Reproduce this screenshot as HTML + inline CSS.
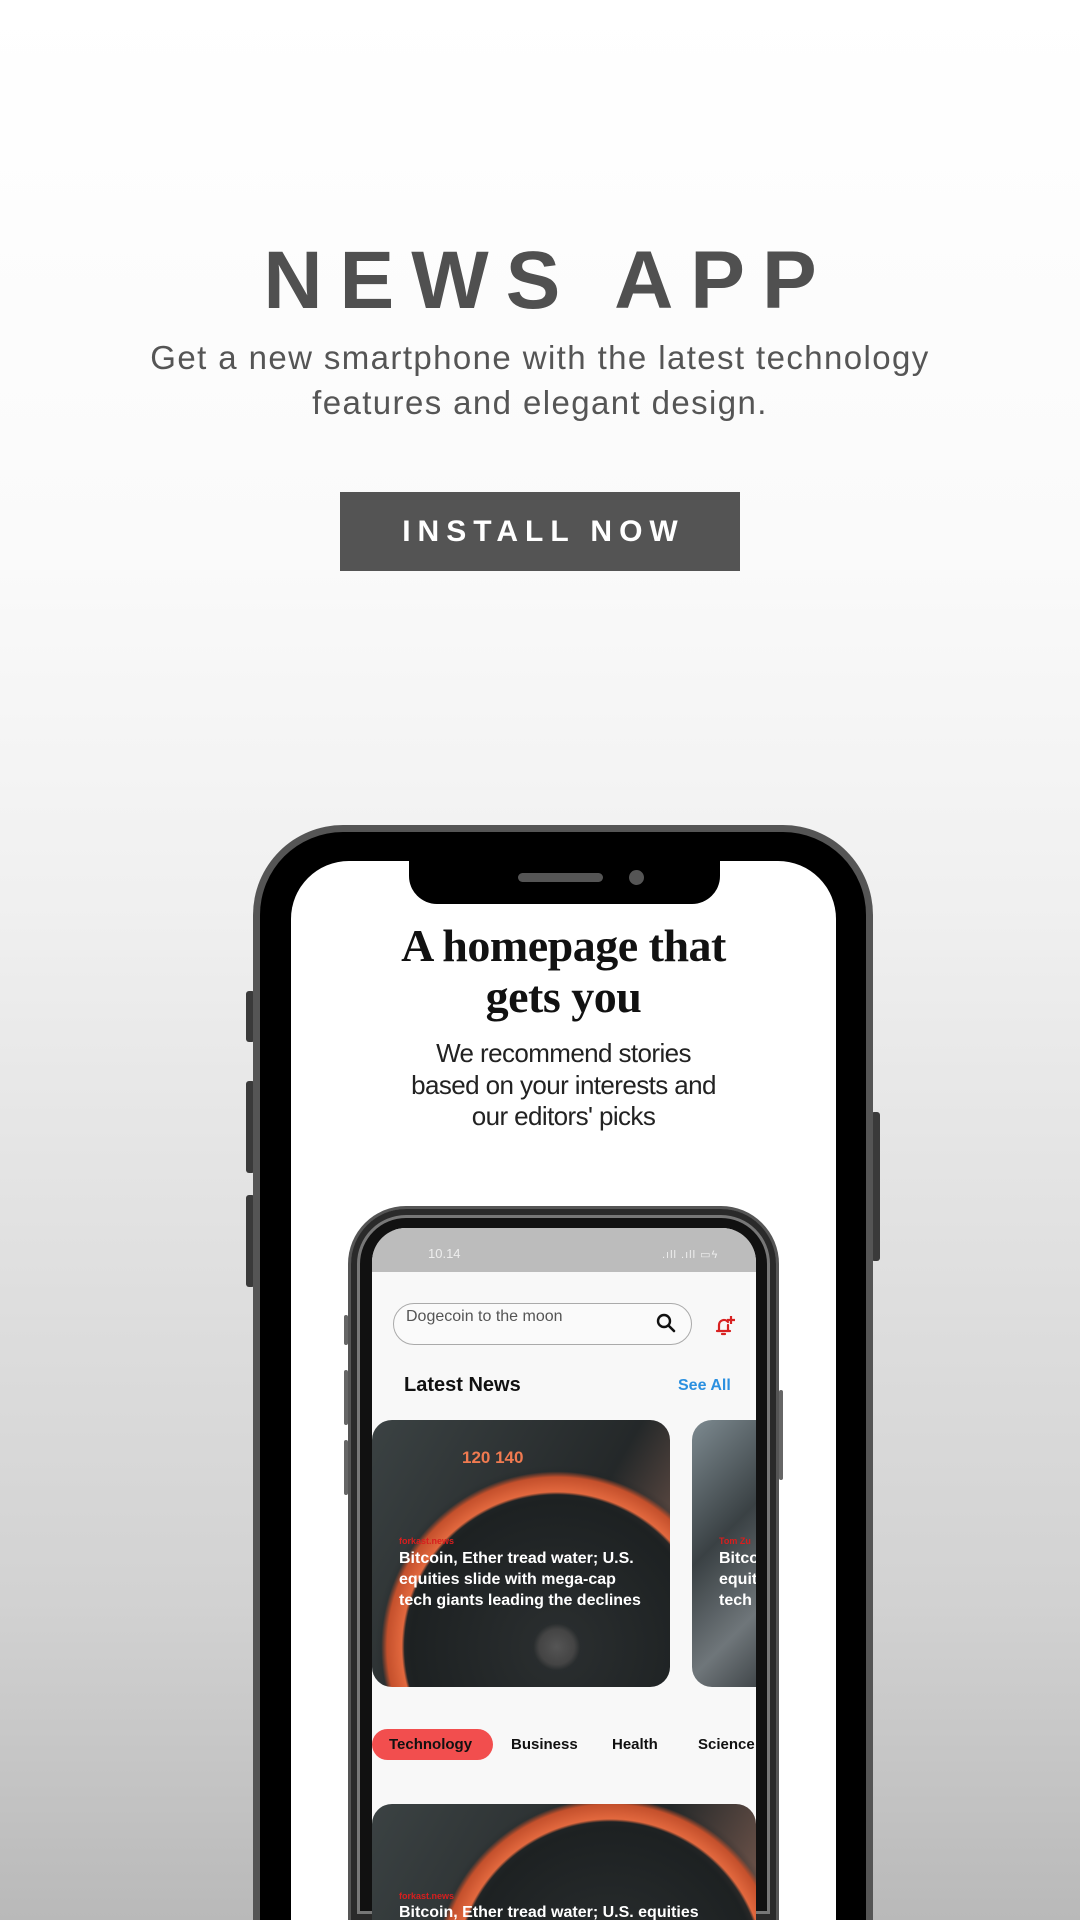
<!DOCTYPE html>
<html><head><meta charset="utf-8">
<style>
*{margin:0;padding:0;box-sizing:border-box}
html,body{width:1080px;height:1920px;overflow:hidden}
body{position:relative;font-family:"Liberation Sans",sans-serif;background:linear-gradient(#ffffff 0px,#fafafa 560px,#f0f0f0 900px,#dedede 1300px,#d2d2d2 1600px,#b9b9b9 1920px)}
.abs{position:absolute}
.title{left:0;width:1080px;top:236px;text-align:center;font-size:82px;font-weight:bold;color:#505050;letter-spacing:17px;padding-left:17px;line-height:90px}
.sub{left:0;width:1080px;top:335px;text-align:center;font-size:33px;color:#555;line-height:45px;letter-spacing:1.4px}
.btn{left:340px;top:492px;width:400px;height:79px;background:#545454;color:#fff;font-weight:bold;font-size:30px;letter-spacing:7px;text-align:center;line-height:79px;padding-left:7px}
.phone{left:253px;top:825px;width:620px;height:1095px;border-radius:90px 90px 0 0;background:#000;border:7px solid #555;border-bottom:0}
.screen{left:291px;top:861px;width:545px;height:1059px;border-radius:58px 58px 0 0;background:#fff;overflow:hidden}
.notch{left:409px;top:850px;width:311px;height:54px;background:#000;border-radius:0 0 28px 28px}
.btnside{background:#3a3a3a;border-radius:3px}
h2{position:absolute;left:291px;width:545px;text-align:center;font-family:"Liberation Serif",serif;font-weight:bold;font-size:46px;line-height:51px;top:920px;color:#111;letter-spacing:-0.5px}
.rec{left:291px;width:545px;top:1038px;text-align:center;font-size:26px;line-height:31.5px;color:#222;letter-spacing:-0.6px}
.iphone{left:348px;top:1206px;width:431px;height:714px;border-radius:58px 58px 0 0;background:#111;border:3px solid #555;border-bottom:0;box-shadow:inset 0 0 0 6px #2a2a2a,inset 0 0 0 9px #777}
.iscreen{left:372px;top:1228px;width:384px;height:692px;border-radius:34px 34px 0 0;background:#f8f8f8;overflow:hidden}
.card{position:absolute;border-radius:20px;overflow:hidden;background:
radial-gradient(circle at 62% 85%,#555 0,#444 6%,transparent 8%),
radial-gradient(circle at 62% 85%,transparent 52%,#e2683e 53%,#c4502c 58%,transparent 60%),
radial-gradient(circle at 62% 85%,#2b2f30 0,#1d2122 50%,transparent 62%),
linear-gradient(120deg,#3b4243,#242829 60%,#6a5148 85%,#2c2c2c)}
.ct{position:absolute;color:#fff;font-weight:bold;font-size:16px;line-height:21px}
.lab{position:absolute;color:#d81e1e;font-size:9px;font-weight:bold}
</style></head><body>
<div class="abs title">NEWS APP</div>
<div class="abs sub">Get a new smartphone with the latest technology<br>features and elegant design.</div>
<div class="abs btn">INSTALL NOW</div>

<div class="abs btnside" style="left:246px;top:991px;width:9px;height:51px"></div>
<div class="abs btnside" style="left:246px;top:1081px;width:9px;height:92px"></div>
<div class="abs btnside" style="left:246px;top:1195px;width:9px;height:92px"></div>
<div class="abs btnside" style="left:871px;top:1112px;width:9px;height:149px"></div>
<div class="abs phone"></div>
<div class="abs screen"></div>
<div class="abs notch"></div>
<div class="abs" style="left:518px;top:873px;width:85px;height:9px;border-radius:5px;background:#555"></div>
<div class="abs" style="left:629px;top:870px;width:15px;height:15px;border-radius:50%;background:#555"></div>

<h2>A homepage that<br>gets you</h2>
<div class="abs rec">We recommend stories<br>based on your interests and<br>our editors' picks</div>

<div class="abs iphone"></div>
<div class="abs btnside" style="left:344px;top:1315px;width:4px;height:30px;background:#666"></div>
<div class="abs btnside" style="left:344px;top:1370px;width:4px;height:55px;background:#666"></div>
<div class="abs btnside" style="left:344px;top:1440px;width:4px;height:55px;background:#666"></div>
<div class="abs btnside" style="left:779px;top:1390px;width:4px;height:90px;background:#666"></div>
<div class="abs iscreen">
  <div class="abs" style="left:0;top:0;width:384px;height:44px;background:#bcbcbc"></div>
  <div class="abs" style="left:56px;top:18px;color:#eee;font-size:13px">10.14</div>
  <div class="abs" style="left:290px;top:20px;color:#eee;font-size:11px;letter-spacing:1px">.ıll .ıll ▭ϟ</div>
  <div class="abs" style="left:21px;top:75px;width:299px;height:42px;border:1px solid #aaa;border-radius:21px;background:#fafafa"></div>
  <div class="abs" style="left:34px;top:80px;font-size:16px;color:#555">Dogecoin to the moon</div>
  <svg class="abs" style="left:283px;top:84px" width="22" height="22" viewBox="0 0 22 22"><circle cx="9" cy="9" r="6" fill="none" stroke="#111" stroke-width="2.4"/><path d="M13.5 13.5L19 19" stroke="#111" stroke-width="2.6" stroke-linecap="round"/></svg>
  <svg class="abs" style="left:340px;top:84px" width="26" height="26" viewBox="0 0 26 26"><path d="M5 19h13M7 19v-6a5 5 0 0 1 9-3M16 13v6M10 22h3" fill="none" stroke="#d82222" stroke-width="2.2" stroke-linecap="round"/><path d="M19 4v8M15 8h8" stroke="#d82222" stroke-width="2.2"/></svg>
  <div class="abs" style="left:32px;top:146px;font-size:20px;font-weight:bold;color:#111">Latest News</div>
  <div class="abs" style="left:306px;top:149px;font-size:16px;font-weight:bold;color:#2b90e0">See All</div>
  <div class="card" style="left:0;top:192px;width:298px;height:267px">
    <div class="abs" style="left:90px;top:28px;color:#f07a50;font-weight:bold;font-size:17px">120 140</div>
    <div class="lab" style="left:27px;top:116px">forkast.news</div>
    <div class="ct" style="left:27px;top:128px;width:245px">Bitcoin, Ether tread water; U.S. equities slide with mega-cap tech giants leading the declines</div>
  </div>
  <div class="card" style="left:320px;top:192px;width:100px;height:267px;background:linear-gradient(135deg,#7d8a90,#3a4144 40%,#6f767a 70%,#2c3134)">
    <div class="lab" style="left:27px;top:116px">Tom Zu</div>
    <div class="ct" style="left:27px;top:128px;width:260px">Bitcoin,<br>equities<br>tech</div>
  </div>
  <div class="abs" style="left:0;top:501px;width:121px;height:31px;border-radius:16px;background:#f24e4e"></div>
  <div class="abs" style="left:17px;top:508px;font-size:15px;font-weight:bold;color:#111">Technology</div>
  <div class="abs" style="left:139px;top:508px;font-size:15px;font-weight:bold;color:#111">Business</div>
  <div class="abs" style="left:240px;top:508px;font-size:15px;font-weight:bold;color:#111">Health</div>
  <div class="abs" style="left:326px;top:508px;font-size:15px;font-weight:bold;color:#111">Science</div>
  <div class="card" style="left:0;top:576px;width:384px;height:200px">
    <div class="lab" style="left:27px;top:87px">forkast.news</div>
    <div class="ct" style="left:27px;top:98px;width:325px">Bitcoin, Ether tread water; U.S. equities slide with mega-cap tech giants leading</div>
  </div>
</div>
</body></html>
